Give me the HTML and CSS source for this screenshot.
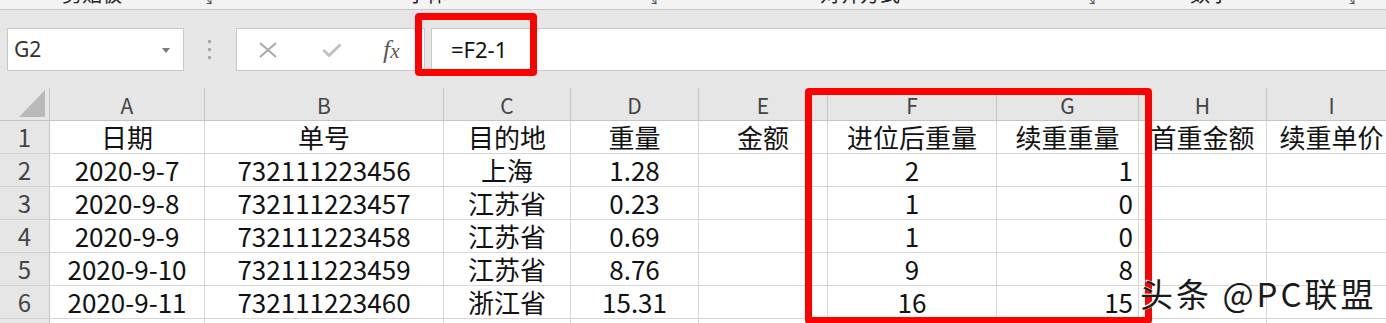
FILE: index.html
```html
<!DOCTYPE html>
<html lang="zh">
<head>
<meta charset="utf-8">
<title>Excel</title>
<link rel="stylesheet" href="styles.css">
</head>
<body>
<div class="page">
  <div class="ribbon-tail">
    <span class="rt c2">剪贴板</span>
    <span class="rt launch c3">↘</span>
    <span class="rt c4">字体</span>
    <span class="rt launch c5">↘</span>
    <span class="rt c6">对齐方式</span>
    <span class="rt launch c7">↘</span>
    <span class="rt c8">数字</span>
    <span class="rt launch c9">↘</span>
  </div>

  <div class="fbar">
    <div class="namebox">
      <span class="ref">G2</span>
      <svg class="caret" width="8" height="5" viewBox="0 0 8 5"><path d="M0 0 L8 0 L4 5 Z" fill="#7a7a7a"/></svg>
    </div>
    <div class="grip"><i></i><i></i><i></i></div>
    <div class="tools">
      <svg class="tool cancel" width="18" height="16" viewBox="0 0 18 16"><path d="M1 1 L17 15 M17 1 L1 15" stroke="#a9a9a9" stroke-width="2" fill="none"/></svg>
      <svg class="tool enter" width="20" height="14" viewBox="0 0 20 14"><path d="M1.5 7 L7 12.5 L18.5 1.5" stroke="#c2c2c2" stroke-width="3" fill="none"/></svg>
      <span class="tool fx">f<span class="x">x</span></span>
    </div>
    <div class="formula">=F2-1</div>
  </div>

  <div class="sheet">
    <div class="hd corner"><svg width="26" height="27" viewBox="0 0 26 27"><path d="M26 0 L26 27 L0 27 Z" fill="#b9b9b9"/></svg></div>
    <div class="hd col">A</div><div class="hd col">B</div><div class="hd col">C</div><div class="hd col">D</div><div class="hd col">E</div><div class="hd col">F</div><div class="hd col">G</div><div class="hd col">H</div><div class="hd col">I</div>

    <div class="rh">1</div>
    <div class="c">日期</div><div class="c">单号</div><div class="c">目的地</div><div class="c">重量</div><div class="c">金额</div><div class="c">进位后重量</div><div class="c">续重重量</div><div class="c">首重金额</div><div class="c">续重单价</div>

    <div class="rh">2</div>
    <div class="c">2020-9-7</div><div class="c">732111223456</div><div class="c">上海</div><div class="c">1.28</div><div class="c"></div><div class="c">2</div><div class="c r">1</div><div class="c"></div><div class="c"></div>

    <div class="rh">3</div>
    <div class="c">2020-9-8</div><div class="c">732111223457</div><div class="c">江苏省</div><div class="c">0.23</div><div class="c"></div><div class="c">1</div><div class="c r">0</div><div class="c"></div><div class="c"></div>

    <div class="rh">4</div>
    <div class="c">2020-9-9</div><div class="c">732111223458</div><div class="c">江苏省</div><div class="c">0.69</div><div class="c"></div><div class="c">1</div><div class="c r">0</div><div class="c"></div><div class="c"></div>

    <div class="rh">5</div>
    <div class="c">2020-9-10</div><div class="c">732111223459</div><div class="c">江苏省</div><div class="c">8.76</div><div class="c"></div><div class="c">9</div><div class="c r">8</div><div class="c"></div><div class="c"></div>

    <div class="rh">6</div>
    <div class="c">2020-9-11</div><div class="c">732111223460</div><div class="c">浙江省</div><div class="c">15.31</div><div class="c"></div><div class="c">16</div><div class="c r">15</div><div class="c"></div><div class="c"></div>

    <div class="rh">7</div>
    <div class="c"></div><div class="c"></div><div class="c"></div><div class="c"></div><div class="c"></div><div class="c"></div><div class="c"></div><div class="c"></div><div class="c"></div>
  </div>

  <div class="hl hl-formula"></div>
  <div class="hl hl-cols"></div>
  <div class="watermark">头条 @PC联盟</div>
</div>
</body>
</html>
```

FILE: styles.css
```css
html, body {
  margin: 0;
  padding: 0;
  background: #fff;
}

.page {
  position: relative;
  width: 1386px;
  height: 323px;
  overflow: hidden;
  background: #fff;
  font-family: "Noto Sans CJK SC", "Noto Sans", sans-serif;
  color: #000;
}

/* cut-off ribbon group labels */
.ribbon-tail {
  height: 10px;
  box-sizing: border-box;
  background: #f3f3f3;
  border-bottom: 1px solid #c9c9c9;
  overflow: hidden;
  display: grid;
  grid-template-columns: 62px 138px 207px 238px 175px 263px 107px 153px 1fr;
  align-items: start;
}

.rt {
  font-size: 20px;
  line-height: 20px;
  margin-top: -16px;
  color: #222;
  white-space: nowrap;
}

.rt.launch {
  font-size: 14px;
  line-height: 14px;
  margin-top: -9px;
  color: #555;
}

.c2 { grid-column: 2; }
.c3 { grid-column: 3; }
.c4 { grid-column: 4; }
.c5 { grid-column: 5; }
.c6 { grid-column: 6; }
.c7 { grid-column: 7; }
.c8 { grid-column: 8; }
.c9 { grid-column: 9; }

/* formula bar */
.fbar {
  height: 78px;
  box-sizing: border-box;
  background: #e6e6e6;
  padding-top: 18px;
  display: flex;
  align-items: flex-start;
}

.namebox {
  margin-left: 7px;
  width: 177px;
  height: 43px;
  box-sizing: border-box;
  background: #fff;
  border: 1px solid #c8c8c8;
  display: flex;
  align-items: center;
  justify-content: space-between;
  padding: 0 13px 0 6px;
}

.ref {
  font-size: 21px;
  color: #333;
  font-family: "Noto Sans", "Open Sans", sans-serif;
  line-height: 1;
}

.caret {
  margin-top: 1px;
}

.grip {
  width: 4px;
  margin-left: 23px;
  height: 43px;
  display: flex;
  flex-direction: column;
  justify-content: center;
  align-items: center;
  gap: 5px;
}

.grip i {
  display: block;
  width: 3px;
  height: 3px;
  background: #a9a9a9;
}

.tools {
  margin-left: 25px;
  width: 189px;
  height: 43px;
  box-sizing: border-box;
  background: #fff;
  border: 1px solid #c8c8c8;
  display: flex;
  align-items: center;
  padding-left: 22px;
}

.cancel { margin-top: 1px; }
.enter { margin-left: 45px; margin-top: 1px; }

.fx {
  margin-left: 41px;
  font-family: "Liberation Serif", "DejaVu Serif", serif;
  font-style: italic;
  font-size: 26px;
  color: #5a5a5a;
  line-height: 1;
}

.fx .x {
  font-size: 21px;
}

.formula {
  margin-left: 6px;
  flex: 1;
  height: 43px;
  box-sizing: border-box;
  background: #fff;
  border-top: 1px solid #c8c8c8;
  border-bottom: 1px solid #c8c8c8;
  border-left: 1px solid #c8c8c8;
  padding-left: 19px;
  font-family: "Noto Sans", "Open Sans", sans-serif;
  font-size: 22px;
  line-height: 40px;
  color: #111;
}

/* sheet */
.sheet {
  display: grid;
  grid-template-columns: 50px 155px 239px 127px 128px 129px 169px 142px 128px 130px;
  grid-auto-rows: 33px;
  width: 1397px;
}

.sheet > div {
  box-sizing: border-box;
  border-right: 1px solid #d6d6d6;
  border-bottom: 1px solid #d6d6d6;
  white-space: nowrap;
  overflow: hidden;
}

.hd {
  background: #e6e6e6;
  border-right-color: #c4c4c4 !important;
  border-bottom-color: #c4c4c4 !important;
}

.col {
  text-align: center;
  font-size: 21px;
  line-height: 30px;
  padding-top: 2px;
  color: #444;
}

.corner {
  display: flex;
  align-items: flex-end;
  justify-content: flex-end;
  padding: 0 4px 3px 0;
}

.rh {
  background: #e6e6e6;
  border-right-color: #c4c4c4 !important;
  border-bottom-color: #d0d0d0 !important;
  text-align: center;
  font-size: 24px;
  line-height: 32px;
  color: #444;
}

.c {
  text-align: center;
  font-size: 26px;
  line-height: 32px;
  padding-top: 0;
  color: #111;
}

.c.r {
  text-align: right;
  padding-right: 5px;
}

/* red highlight frames drawn over the screenshot */
.hl {
  position: absolute;
  box-sizing: border-box;
  border: 7px solid #ff0000;
  border-radius: 4px;
}

.hl-formula {
  left: 415px;
  top: 13px;
  width: 122px;
  height: 63px;
}

.hl-cols {
  left: 805px;
  top: 88px;
  width: 347px;
  height: 236px;
}

/* watermark */
.watermark {
  position: absolute;
  left: 1140px;
  top: 272px;
  font-size: 33px;
  line-height: 42px;
  letter-spacing: 3px;
  color: #1a1a1a;
  text-shadow: -1px -1px 0 #fff, 1px 0 0 #fff;
  white-space: nowrap;
}
```
